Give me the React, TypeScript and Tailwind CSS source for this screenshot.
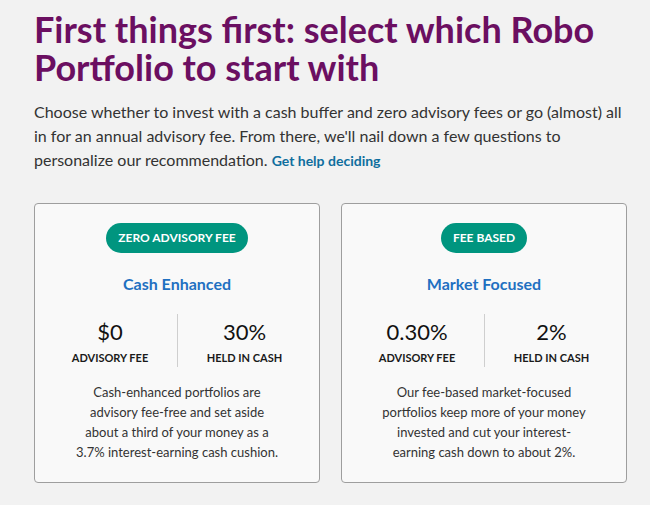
const cards = [
  {
    badge: 'ZERO ADVISORY FEE',
    title: 'Cash Enhanced',
    fee: '$0',
    cash: '30%',
    text: 'Cash-enhanced portfolios are advisory fee-free and set aside about a third of your money as a 3.7% interest-earning cash cushion.',
  },
  {
    badge: 'FEE BASED',
    title: 'Market Focused',
    fee: '0.30%',
    cash: '2%',
    text: 'Our fee-based market-focused portfolios keep more of your money invested and cut your interest-earning cash down to about 2%.',
  },
];

function PortfolioCard({ card }: { card: (typeof cards)[number] }) {
  return (
    <div className="flex flex-col items-center rounded-[4px] border border-[#9e9e9e] bg-[#f9f9f9] px-2 pt-[19px] pb-[20px]">
      <span className="flex h-[30px] items-center rounded-full bg-[#00957f] px-3 text-[12px] font-bold text-white">
        {card.badge}
      </span>
      <h2 className="mt-[19px] text-[16px] leading-6 font-bold text-[#1f70c1]">{card.title}</h2>
      <div className="mt-[18px] grid w-full grid-cols-2">
        <div className="flex flex-col items-center pt-1 pb-[1px]">
          <span className="text-[22px] leading-[28px] text-[#111]">{card.fee}</span>
          <span className="mt-1 text-[11px] leading-4 font-bold text-[#1a1a1a]">ADVISORY FEE</span>
        </div>
        <div className="flex flex-col items-center border-l border-[#cfcfcf] pt-1 pb-[1px]">
          <span className="text-[22px] leading-[28px] text-[#111]">{card.cash}</span>
          <span className="mt-1 text-[11px] leading-4 font-bold text-[#1a1a1a]">HELD IN CASH</span>
        </div>
      </div>
      <p className="mt-[15px] w-[210px] text-center text-[13px] leading-5 text-[#333]">{card.text}</p>
    </div>
  );
}

export default function App() {
  return (
    <div className="min-h-[505px] bg-[#f2f2f2] px-[34px] pt-[10px] font-['Lato',sans-serif]">
      <div className="w-[593px]">
        <h1 className="text-[36px] leading-[38px] font-bold text-[#6b0f61]">
          First things first: select which Robo Portfolio to start with
        </h1>
        <p className="mt-[14px] text-[16px] leading-6 text-[#333]">
          Choose whether to invest with a cash buffer and zero advisory fees or go (almost) all in for an annual
          advisory fee. From there, we'll nail down a few questions to personalize our recommendation.{' '}
          <a href="#" className="text-[14px] font-bold text-[#0f6e9e]">
            Get help deciding
          </a>
        </p>
        <div className="mt-[30px] grid grid-cols-2 gap-[21px]">
          {cards.map((card) => (
            <PortfolioCard key={card.title} card={card} />
          ))}
        </div>
      </div>
    </div>
  );
}
